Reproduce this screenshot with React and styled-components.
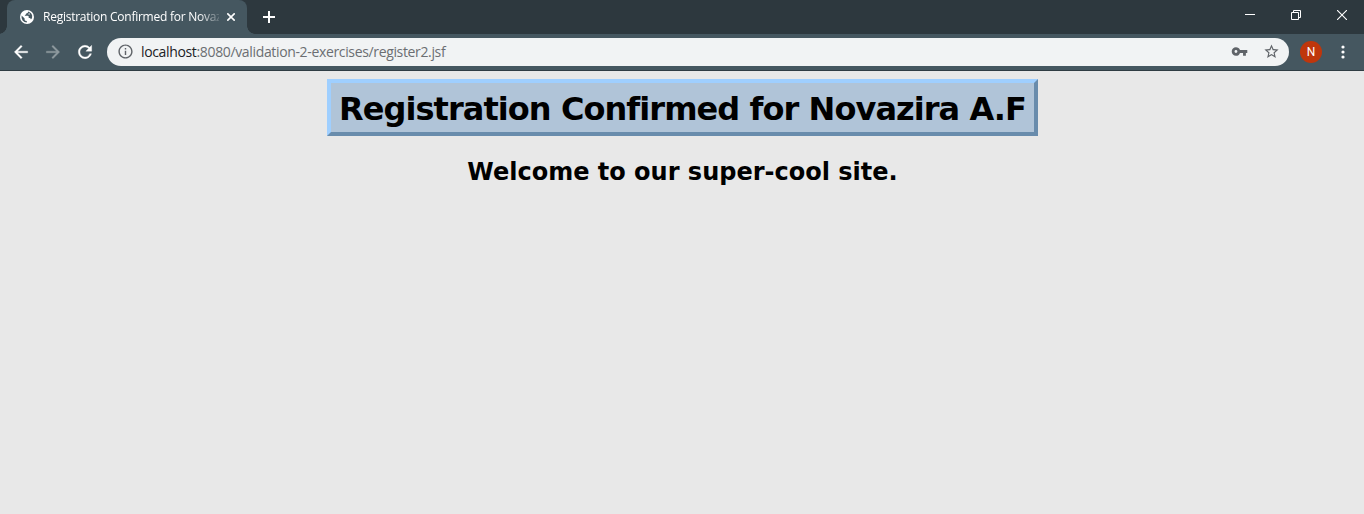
import React from 'react';
import styled, { createGlobalStyle } from 'styled-components';
import { MdArrowBack, MdArrowForward, MdRefresh, MdInfoOutline, MdVpnKey, MdStarBorder } from 'react-icons/md';

const GlobalStyle = createGlobalStyle`
  * { box-sizing: border-box; }
  body { margin: 0; background: #e8e8e8; overflow: hidden; }
`;

const Window = styled.div`
  display: flex;
  flex-direction: column;
  height: 514px;
  font-family: 'Open Sans', 'Noto Sans', sans-serif;
`;

const TabStrip = styled.header`
  display: flex;
  height: 34px;
  padding-left: 7px;
  background: #2d383e;
`;

const Tab = styled.div`
  position: relative;
  display: flex;
  align-items: center;
  width: 240px;
  height: 34px;
  padding: 0 11px 0 13px;
  border-radius: 8px 8px 0 0;
  background: #455760;
  color: #fff;
  &::before, &::after {
    content: '';
    position: absolute;
    bottom: 0;
    width: 8px;
    height: 8px;
  }
  &::before {
    left: -8px;
    background: radial-gradient(circle at 0 0, transparent 7.5px, #455760 8px);
  }
  &::after {
    right: -8px;
    background: radial-gradient(circle at 100% 0, transparent 7.5px, #455760 8px);
  }
`;

const TabTitle = styled.span`
  width: 176px;
  margin-left: 9px;
  overflow: hidden;
  white-space: nowrap;
  font-size: 12px;
  line-height: 18px;
  letter-spacing: ${(p) => p.$spacing}px;
  mask-image: linear-gradient(to right, #000 156px, transparent 180px);
`;

const Glyph = styled.svg`
  display: block;
  flex: none;
  margin-left: ${(p) => p.$left || 0}px;
`;

const NewTab = styled.div`
  display: flex;
  align-items: center;
  padding-left: 15px;
`;

const WindowControls = styled.div`
  display: flex;
  margin: 0 -1px 0 auto;
  height: 29px;
  align-items: center;
`;

const Control = styled.div`
  display: flex;
  justify-content: center;
  width: 46px;
`;

const Toolbar = styled.div`
  display: flex;
  align-items: center;
  height: 37px;
  padding-left: 11px;
  padding-bottom: 1px;
  background: #455760;
  border-bottom: 1px solid #2f3c43;
`;

const NavButton = styled.div`
  display: flex;
  width: 20px;
  margin-right: 12px;
  color: ${(p) => (p.$disabled ? '#8f9a9f' : '#fff')};
  svg path:last-child { stroke: currentColor; stroke-width: 0.4; }
  svg path[fill='none'] { stroke: none; }
`;

const AddressBar = styled.div`
  display: flex;
  align-items: center;
  width: 1182px;
  height: 28px;
  padding: 0 9.5px;
  border-radius: 14px;
  background: #f1f3f4;
  color: #5f6368;
`;

const Url = styled.span`
  flex: 1;
  margin-left: 7.5px;
  font-size: 14px;
  line-height: 20px;
  letter-spacing: ${(p) => p.$spacing}px;
  color: #6b6e72;
  b { font-weight: 400; color: #202124; }
`;

const AddressActions = styled.div`
  display: flex;
  align-items: center;
  gap: 15px;
`;

const Avatar = styled.div`
  width: 22px;
  height: 22px;
  margin-left: 11px;
  border-radius: 50%;
  background: #bf360c;
  color: #fff;
  font: 12px/22px Roboto, sans-serif;
  text-align: center;
`;

const Page = styled.main`
  display: flex;
  flex-direction: column;
  align-items: center;
  flex: 1;
  padding-top: 8px;
  background: #e8e8e8;
  color: #000;
  font-family: Verdana, 'DejaVu Sans', sans-serif;
`;

const Banner = styled.h1`
  width: 711px;
  height: 57px;
  margin: 0 0 0 1px;
  border: 4px solid;
  border-color: #9fcfff #698cac #698cac #9fcfff;
  background: #b0c4d8;
  font-size: 32px;
  line-height: 52px;
  letter-spacing: -0.94px;
  text-align: center;
  white-space: nowrap;
`;

const Welcome = styled.h2`
  margin: 21px 0 0 1px;
  font-size: 24px;
  line-height: 30px;
  letter-spacing: 0;
  white-space: nowrap;
`;

export default function App() {
  return (
    <Window>
      <GlobalStyle />
      <TabStrip>
        <Tab>
          <Glyph width="14" height="14" viewBox="0 0 14 14">
            <circle cx="7" cy="7" r="7" fill="#fff" />
            <path d="M8 1.4 7.9 2.5Q7.8 3.2 6.9 3.3L6.2 3.5 6 4.5 4.8 4.9 5 5.8H7.8Q8.7 5.9 8.7 6.8V8L9.7 8.1Q10.7 8.3 11 9.6Q12.5 7.9 12.2 5.8Q11.5 2.4 8 1.4ZM1.6 5.6Q1.1 8.5 2.6 10.4Q4.2 12.4 6.8 12.5V11L5.4 10.7Q4.6 10.4 4.6 9.4V8.6Z" fill="#455760" />
            <path d="M8.7 3.2 9.8 3.4 9.6 4.7 8.4 4.5Z" fill="#fff" />
          </Glyph>
          <TabTitle $spacing={-0.25}>Registration Confirmed for Novazira A.F</TabTitle>
          <Glyph $left={8} width="8" height="8" viewBox="0 0 8 8" stroke="#fff" strokeWidth="1.6">
            <path d="M.3.3 7.7 7.7M7.7.3.3 7.7" />
          </Glyph>
        </Tab>
        <NewTab>
          <Glyph width="14" height="14" viewBox="0 0 14 14" stroke="#fff" strokeWidth="2">
            <path d="M7 1V13M1 7H13" />
          </Glyph>
        </NewTab>
        <WindowControls>
          <Control>
            <Glyph width="10" height="10" viewBox="0 0 10 10" stroke="#fff">
              <path d="M0 4.5H10" />
            </Glyph>
          </Control>
          <Control>
            <Glyph width="10" height="10" viewBox="0 0 10 10" fill="none" stroke="#fff">
              <path d="M.5 2.5H7.5V9.5H.5ZM2.5 2.5V.5H9.5V7.5H7.5" />
            </Glyph>
          </Control>
          <Control>
            <Glyph width="10" height="10" viewBox="0 0 10 10" stroke="#fff" strokeWidth="1.1">
              <path d="M0 0 10 10M10 0 0 10" />
            </Glyph>
          </Control>
        </WindowControls>
      </TabStrip>
      <Toolbar>
        <NavButton><MdArrowBack size={20} /></NavButton>
        <NavButton $disabled><MdArrowForward size={20} /></NavButton>
        <NavButton><MdRefresh size={20} /></NavButton>
        <AddressBar>
          <MdInfoOutline size={17} />
          <Url $spacing={-0.35}><b>localhost</b>:8080/validation-2-exercises/register2.jsf</Url>
          <AddressActions>
            <MdVpnKey size={17} />
            <MdStarBorder size={17} />
          </AddressActions>
        </AddressBar>
        <Avatar>N</Avatar>
        <Glyph $left={19} width="4" height="14" viewBox="0 0 4 14" fill="#fff">
          <circle cx="2" cy="2" r="1.6" />
          <circle cx="2" cy="7" r="1.6" />
          <circle cx="2" cy="12" r="1.6" />
        </Glyph>
      </Toolbar>
      <Page>
        <Banner>Registration Confirmed for Novazira A.F</Banner>
        <Welcome>Welcome to our super-cool site.</Welcome>
      </Page>
    </Window>
  );
}
